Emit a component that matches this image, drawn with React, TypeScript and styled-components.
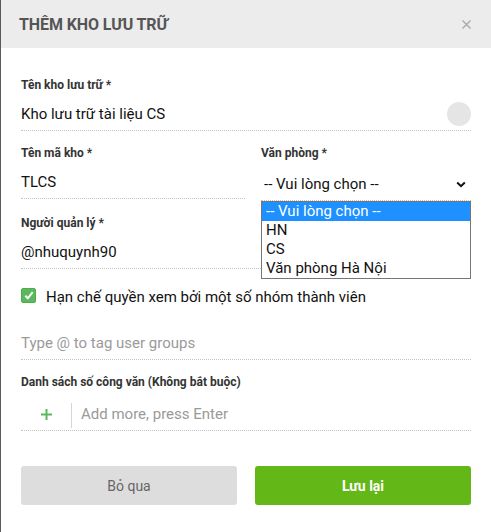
import React from "react";
import styled, { createGlobalStyle } from "styled-components";

const GlobalStyle = createGlobalStyle`
  html, body { margin: 0; padding: 0; background: #ffffff; }
  body { font-family: Roboto, "Liberation Sans", Arial, sans-serif; }
  * { box-sizing: border-box; }
`;

const Modal = styled.div`
  width: 491px;
  height: 532px;
  background: #ffffff;
  border-left: 1px solid #5a5a5a;
  overflow: hidden;
`;

const Header = styled.header`
  height: 48px;
  background: #ececec;
  display: flex;
  align-items: center;
  justify-content: space-between;
  padding: 0 20px 0 18px;
`;

const Title = styled.h2`
  margin: 0;
  font-size: 16px;
  font-weight: 700;
  color: #555555;
  text-transform: uppercase;
  letter-spacing: -0.1px;
`;

const CloseButton = styled.button`
  border: 0;
  background: transparent;
  padding: 0;
  width: 9px;
  height: 9px;
  display: flex;
  cursor: pointer;
  margin-top: 1px;
`;

const Body = styled.div`
  padding: 29px 20px 0 20px;
`;

const Field = styled.div<{ $gap?: number }>`
  margin-bottom: ${(p) => (p.$gap ?? 14)}px;
  position: relative;
`;

const Label = styled.label`
  display: block;
  font-size: 12px;
  line-height: 16px;
  font-weight: 700;
  color: #333333;
`;

const InputLine = styled.div<{ $top?: number; $muted?: boolean }>`
  margin-top: ${(p) => (p.$top ?? 5)}px;
  height: 33px;
  border-bottom: 1px dotted #c4c4c4;
  display: flex;
  align-items: center;
  font-size: 15px;
  color: ${(p) => (p.$muted ? "#9a9a9a" : "#111111")};
`;

const InputText = styled.span`
  flex: 1;
`;

const Avatar = styled.span`
  width: 24px;
  height: 24px;
  border-radius: 50%;
  background: #e5e5e5;
  margin-top: -1px;
`;

const TwoCols = styled.div`
  display: grid;
  grid-template-columns: 224px 1fr;
  column-gap: 16px;
`;

const SelectBox = styled.div`
  position: relative;
  margin-top: 5px;
  height: 35px;
  border-bottom: 1px dotted #c4c4c4;
  display: flex;
  align-items: center;
  justify-content: space-between;
  padding: 2px 5px 0 3px;
  font-size: 15px;
  color: #111111;
`;

const Chevron = styled.svg`
  width: 10px;
  height: 7px;
`;

const Dropdown = styled.ul`
  position: absolute;
  top: 100%;
  left: 0;
  right: 0;
  margin: 1px 0 0 0;
  padding: 0;
  list-style: none;
  background: #ffffff;
  border: 1px solid #767676;
  z-index: 5;
`;

const Option = styled.li<{ $active?: boolean }>`
  height: 19px;
  line-height: 19px;
  padding-left: 4px;
  font-size: 15px;
  color: ${(p) => (p.$active ? "#ffffff" : "#111111")};
  background: ${(p) => (p.$active ? "#1e90ff" : "transparent")};
`;

const CheckRow = styled.div`
  display: flex;
  align-items: flex-start;
  gap: 10px;
  margin-top: 18px;
  font-size: 15px;
  line-height: 20px;
  color: #111111;
`;

const CheckBox = styled.span`
  width: 15px;
  height: 15px;
  border-radius: 2px;
  background: #5cb85c;
  border: 1px solid #4cae4c;
  display: flex;
  align-items: center;
  justify-content: center;
  flex-shrink: 0;
  margin-top: 1px;
`;

const TagField = styled.div`
  margin-top: 20px;
  margin-bottom: 14px;
`;

const AddRow = styled(InputLine)`
  align-items: stretch;
`;

const PlusCell = styled.span`
  width: 50px;
  display: flex;
  align-items: center;
  justify-content: center;
  padding-top: 1px;
`;

const Divider = styled.span`
  width: 1px;
  height: 25px;
  margin-top: 5px;
  background: #d6d6d6;
`;

const AddText = styled.span`
  display: flex;
  align-items: center;
  padding-left: 9px;
  color: #9a9a9a;
`;

const Actions = styled.div`
  display: grid;
  grid-template-columns: 1fr 1fr;
  column-gap: 18px;
  margin-top: 35px;
`;

const Button = styled.button<{ $primary?: boolean }>`
  height: 39px;
  border: 0;
  border-radius: 3px;
  font-family: Roboto, "Liberation Sans", Arial, sans-serif;
  font-size: 14px;
  font-weight: ${(p) => (p.$primary ? 700 : 400)};
  background: ${(p) => (p.$primary ? "#63b716" : "#dddddd")};
  color: ${(p) => (p.$primary ? "#ffffff" : "#666666")};
  cursor: pointer;
`;

export default function App() {
  const options = ["-- Vui lòng chọn --", "HN", "CS", "Văn phòng Hà Nội"];
  return (
    <>
      <GlobalStyle />
      <Modal>
        <Header>
          <Title>Thêm kho lưu trữ</Title>
          <CloseButton aria-label="close">
            <svg width="9" height="9" viewBox="0 0 9 9">
              <path d="M0.5 0.5 L8.5 8.5 M8.5 0.5 L0.5 8.5" stroke="#a9a9a9" strokeWidth="1.4" />
            </svg>
          </CloseButton>
        </Header>
        <Body>
          <Field>
            <Label>Tên kho lưu trữ *</Label>
            <InputLine>
              <InputText>Kho lưu trữ tài liệu CS</InputText>
              <Avatar />
            </InputLine>
          </Field>

          <TwoCols>
            <Field>
              <Label>Tên mã kho *</Label>
              <InputLine>
                <InputText>TLCS</InputText>
              </InputLine>
            </Field>
            <Field>
              <Label>Văn phòng *</Label>
              <SelectBox>
                <span>-- Vui lòng chọn --</span>
                <Chevron viewBox="0 0 10 7">
                  <path d="M1.2 1.5 L5 5.2 L8.8 1.5" fill="none" stroke="#111" strokeWidth="2" />
                </Chevron>
                <Dropdown>
                  {options.map((o, i) => (
                    <Option key={o} $active={i === 0}>
                      {o}
                    </Option>
                  ))}
                </Dropdown>
              </SelectBox>
            </Field>
          </TwoCols>

          <Field $gap={0}>
            <Label>Người quản lý *</Label>
            <InputLine>
              <InputText>@nhuquynh90</InputText>
            </InputLine>
          </Field>

          <CheckRow>
            <CheckBox>
              <svg width="10" height="9" viewBox="0 0 10 9">
                <path d="M1.3 4.8 L3.8 7.3 L8.7 1.2" fill="none" stroke="#fff" strokeWidth="2" />
              </svg>
            </CheckBox>
            <span>Hạn chế quyền xem bởi một số nhóm thành viên</span>
          </CheckRow>

          <TagField>
            <InputLine $top={0} $muted>
              <InputText>Type @ to tag user groups</InputText>
            </InputLine>
          </TagField>

          <Field $gap={0}>
            <Label>Danh sách số công văn (Không bắt buộc)</Label>
            <AddRow $top={8}>
              <PlusCell>
                <svg width="11" height="11" viewBox="0 0 11 11">
                  <path d="M5.5 0 V11 M0 5.5 H11" stroke="#5cb85c" strokeWidth="2" />
                </svg>
              </PlusCell>
              <Divider />
              <AddText>Add more, press Enter</AddText>
            </AddRow>
          </Field>

          <Actions>
            <Button>Bỏ qua</Button>
            <Button $primary>Lưu lại</Button>
          </Actions>
        </Body>
      </Modal>
    </>
  );
}
